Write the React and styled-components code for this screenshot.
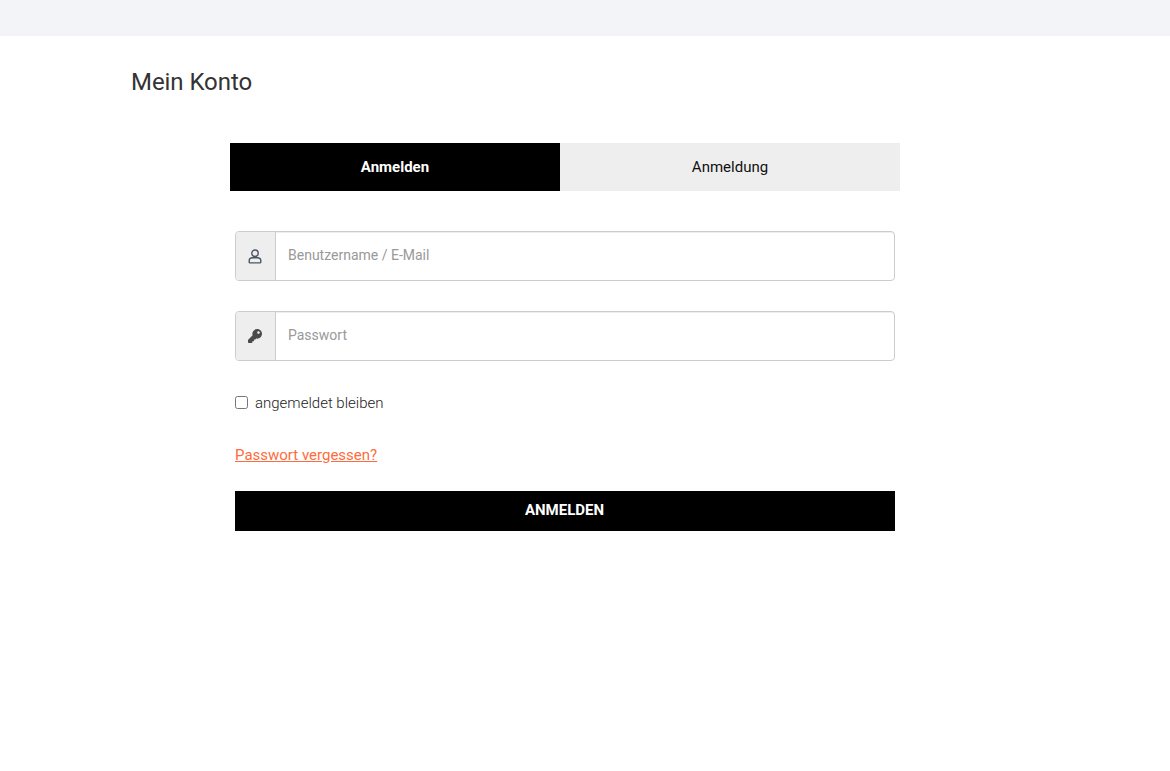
import React from "react";
import styled, { createGlobalStyle } from "styled-components";
import { FaKey } from "react-icons/fa";

const Global = createGlobalStyle`
  html, body { margin: 0; padding: 0; background: #fff; }
  body { font-family: Roboto, "Liberation Sans", sans-serif; color: #333; }
  * { box-sizing: border-box; }
`;
const TopBar = styled.div`height: 36px; background: #f2f4f8;`;
const Page = styled.main`padding: 32px 0 0 131px;`;
const Title = styled.h1`
  margin: 0; font-size: 24px; font-weight: 400; line-height: 28px; color: #333; letter-spacing: -0.06px;
`;
const Panel = styled.section`width: 670px; margin: 47px 0 0 99px;`;
const Tabs = styled.div`display: grid; grid-template-columns: 330px 340px; height: 48px;`;
const Tab = styled.div`
  display: flex; align-items: center; justify-content: center;
  font-size: 15px; font-weight: ${p => (p.$active ? 700 : 400)};
  background: ${p => (p.$active ? "#000" : "#eee")};
  color: ${p => (p.$active ? "#fff" : "#111")};
`;
const Form = styled.form`display: flex; flex-direction: column; padding: 40px 5px 0;`;
const Field = styled.div`
  display: flex; height: 50px; margin-bottom: 30px;
  border: 1px solid #ccc; border-radius: 4px; overflow: hidden;
  box-shadow: inset 0 1px 1px rgba(0, 0, 0, 0.075);
`;
const Addon = styled.span`
  flex: 0 0 40px; display: flex; align-items: center; justify-content: center;
  background: #eee; border-right: 1px solid #ccc; color: #555; padding-right: 1px;
`;
const Input = styled.input`
  flex: 1; border: 0; outline: 0; padding: 0 12px 2px; font: 400 14px Roboto, sans-serif; color: #333;
  background: transparent;
  &::placeholder { color: #999; opacity: 1; }
`;
const Remember = styled.label`
  display: flex; align-items: center; height: 24px; margin-bottom: 30px;
  font-size: 15px; font-weight: 300; color: #222;
`;
const Check = styled.input`width: 13px; height: 13px; margin: 0 7px 2px 0;`;
const ForgotLink = styled.a`
  font-size: 15px; line-height: 20px; color: #ff6b3d; text-decoration: underline; align-self: flex-start;
`;
const Submit = styled.button`
  height: 40px; margin-top: 26px; padding: 0 1px 2px 0; border: 0; background: #000; color: #fff;
  font: 700 15px Roboto, sans-serif; text-transform: uppercase;
`;
const UserIcon = () => (
  <svg width="14" height="15" viewBox="0 0 14 15" fill="none" stroke="#4b5563" strokeWidth="1.4">
    <circle cx="7" cy="4.2" r="3.2" />
    <path d="M4.6 8.8 H9.4 C11.4 8.8 12.8 10.2 12.8 11.8 V13 C12.8 13.6 12.4 13.9 11.8 13.9 H2.2 C1.6 13.9 1.2 13.6 1.2 13 V11.8 C1.2 10.2 2.6 8.8 4.6 8.8 Z" />
  </svg>
);

export default function App() {
  return (
    <>
      <Global />
      <TopBar />
      <Page>
        <Title>Mein Konto</Title>
        <Panel>
          <Tabs>
            <Tab $active>Anmelden</Tab>
            <Tab>Anmeldung</Tab>
          </Tabs>
          <Form onSubmit={e => e.preventDefault()}>
            <Field>
              <Addon><UserIcon /></Addon>
              <Input placeholder="Benutzername / E-Mail" />
            </Field>
            <Field>
              <Addon><FaKey size={14} color="#4a4a4a" /></Addon>
              <Input type="password" placeholder="Passwort" />
            </Field>
            <Remember><Check type="checkbox" />angemeldet bleiben</Remember>
            <ForgotLink href="#">Passwort vergessen?</ForgotLink>
            <Submit type="submit">Anmelden</Submit>
          </Form>
        </Panel>
      </Page>
    </>
  );
}
